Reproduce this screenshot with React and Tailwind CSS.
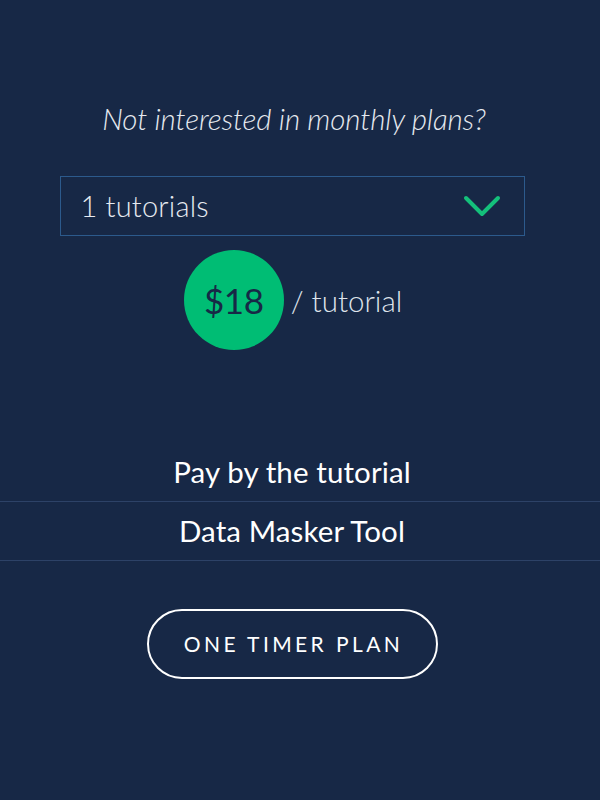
export default function App() {
  const font = { fontFamily: '"Lato", "Open Sans", sans-serif' };
  return (
    <div className="w-[600px] h-[800px] bg-[#172846] flex flex-col" style={font}>
      <div className="w-[584px] flex flex-col items-center">
        <p className="mt-[99px] text-[29.5px] leading-[40px] italic font-light text-[#e6eaf0] tracking-[-0.1px] ml-[4px]">
          Not interested in monthly plans?
        </p>
        <div className="mt-[37px] w-[465px] h-[60px] border border-[#2c5a8c] flex items-center justify-between pl-[20px] pr-[23px]">
          <span className="text-[29px] font-light text-[#e6eaf0] tracking-[0.2px]">1 tutorials</span>
          <svg width="38" height="24" viewBox="0 0 38 24">
            <path d="M3 4 L19 20 L35 4" fill="none" stroke="#14c07b" strokeWidth="4" strokeLinecap="round" strokeLinejoin="round" />
          </svg>
        </div>
        <div className="mt-[14px] flex items-center gap-[7px] ml-[2px]">
          <div className="w-[100px] h-[100px] rounded-full bg-[#00bd74] flex items-center justify-center">
            <span className="text-[35px] text-[#172846] tracking-[-0.5px]">$18</span>
          </div>
          <span className="text-[29.5px] font-light text-[#dfe4ec] tracking-[0px] mt-[2px]">/ tutorial</span>
        </div>
      </div>
      <div className="mt-[97px] w-full flex flex-col">
        <div className="h-[54px] w-[584px] flex items-center justify-center text-[29.5px] text-white tracking-[0.1px] pb-[3px]">
          Pay by the tutorial
        </div>
        <div className="h-[60px] w-full border-y border-[#2d4267]">
          <div className="w-[584px] h-full flex items-center justify-center text-[29.5px] text-white tracking-[0.1px]">
            Data Masker Tool
          </div>
        </div>
      </div>
      <div className="w-[584px] flex justify-center">
        <button className="mt-[48px] w-[291px] h-[70px] rounded-full border-2 border-white flex items-center justify-center text-[21px] text-white tracking-[3.4px] pl-[3px]">
          ONE TIMER PLAN
        </button>
      </div>
    </div>
  );
}
